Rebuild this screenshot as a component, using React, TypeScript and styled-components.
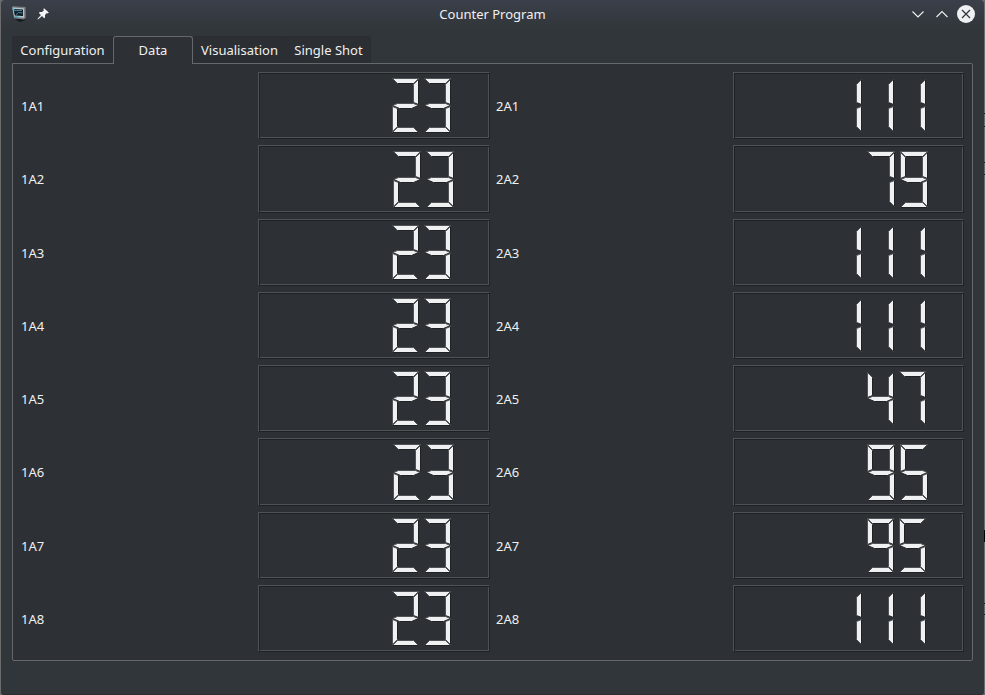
import React from "react";
import styled, { createGlobalStyle } from "styled-components";

const GlobalStyle = createGlobalStyle`
  html, body { margin: 0; padding: 0; background: #6c6c6c; overflow: hidden; }
  * { box-sizing: border-box; }
`;

const Desktop = styled.div`
  width: 985px;
  height: 695px;
  padding: 0 1px;
  background:
    linear-gradient(#141414, #141414) 984px 113px / 1px 1px no-repeat,
    linear-gradient(#141414, #141414) 984px 126px / 1px 1px no-repeat,
    linear-gradient(#141414, #141414) 984px 162px / 1px 1px no-repeat,
    linear-gradient(#141414, #141414) 984px 174px / 1px 1px no-repeat,
    linear-gradient(#000, #000) 984px 530px / 1px 12px no-repeat,
    linear-gradient(#141414, #141414) 984px 603px / 1px 1px no-repeat,
    linear-gradient(#141414, #141414) 984px 614px / 1px 1px no-repeat,
    #6c6c6c;
`;

const Window = styled.div`
  display: flex;
  flex-direction: column;
  height: 695px;
  border-radius: 4px 4px 3px 3px;
  border-bottom: 1px solid #2b2e33;
  background: linear-gradient(#3b3f4a 0, #31363a 29px, #31363a 100%);
  color: #eff0f1;
  font-family: "Noto Sans", sans-serif;
  font-size: 13px;
  line-height: 18px;
  overflow: hidden;
`;

const TitleBar = styled.header`
  display: grid;
  grid-template-columns: 60px 1fr 60px;
  align-items: center;
  height: 29px;
  padding: 0 9px 1px 9px;
`;

const TitleIcons = styled.div`
  display: flex;
  gap: 9px;
`;

const PinSlot = styled.div`
  padding-top: 3px;
`;

const Title = styled.div`
  text-align: center;
`;

const WindowButtons = styled.div`
  display: flex;
  justify-content: flex-end;
`;

const Icon = styled.svg`
  display: block;
  flex: none;
`;

const TabBar = styled.nav`
  display: flex;
  height: 28px;
  margin: 7px 0 -1px 11px;
  position: relative;
`;

const Tab = styled.div<{ $width: number; $active?: boolean; $last?: boolean }>`
  width: ${(p) => p.$width}px;
  height: ${(p) => (p.$active ? 28 : 27)}px;
  padding-top: ${(p) => (p.$active ? 4 : 5)}px;
  text-align: center;
  background: ${(p) => (p.$active ? "#2d3034" : "#2b2e32")};
  border: solid #66696c;
  border-width: ${(p) => (p.$active ? "1px 1px 0" : "0")};
  border-radius: ${(p) => (p.$active ? "3px 3px 0 0" : p.$last ? "0 3px 0 0" : "0")};
  box-shadow: ${(p) => (p.$active || p.$last ? "none" : "inset -1px 0 #292c30")};
`;

const Panel = styled.main`
  display: grid;
  grid-template-columns: 231px 232px 231px 231px;
  gap: 6px;
  grid-template-rows: 67px 68px 67px 67px 67px 68px 67px 67px;
  width: 961px;
  height: 598px;
  margin-left: 11px;
  padding: 8px;
  background: #2d3034;
  border: 1px solid #66696c;
  border-radius: 0 2px 2px 2px;
`;

const Label = styled.div`
  align-self: center;
`;

const LcdFrame = styled.div`
  border: 1px solid;
  border-color: #505356 #1f2225 #1f2225 #505356;
  box-shadow: inset 1px 1px #1f2225, inset -1px -1px #505356;
`;

const LcdSvg = styled.svg`
  display: block;
  margin: -1px;
`;

type Point = [number, number];
type Edge = { to: Point; dark: boolean };

// Segments: 0 top, 1 upper left, 2 upper right, 3 middle, 4 lower left, 5 lower right, 6 bottom
const SEGMENTS: Record<string, number[]> = {
  "1": [2, 5],
  "2": [0, 2, 3, 4, 6],
  "3": [0, 2, 3, 5, 6],
  "4": [1, 2, 3, 5],
  "5": [0, 1, 3, 5, 6],
  "7": [0, 2, 5],
  "9": [0, 1, 2, 3, 5, 6],
};

function segmentShape(no: number, len: number): { origin: Point; edges: Edge[] } {
  const w = Math.floor(len / 5);
  const h = Math.floor(w / 2);
  const L = (x: number, y: number): Edge => ({ to: [x, y], dark: false });
  const D = (x: number, y: number): Edge => ({ to: [x, y], dark: true });
  switch (no) {
    case 0:
      return { origin: [0, 0], edges: [L(len - 1, 0), L(len - w - 1, w), D(w, w), L(0, 0)] };
    case 1:
      return { origin: [0, 1], edges: [L(w, w), D(w, len - h - 2), D(0, len - 2), L(0, 0)] };
    case 2:
      return { origin: [len - 1, 1], edges: [D(0, len - 2), D(-w, len - h - 2), L(-w, w), L(0, 0)] };
    case 3:
      return {
        origin: [0, len],
        edges: [L(w, -h), L(len - w - 1, -h), L(len - 1, 0), D(len - w - 3, h + 1), D(w + 2, h + 1), D(0, 0)],
      };
    case 4:
      return { origin: [0, len + 1], edges: [L(w, h), D(w, len - w - 2), L(0, len - 2), L(0, 0)] };
    case 5:
      return { origin: [len - 1, len + 1], edges: [D(0, len - 2), L(-w, len - w - 2), L(-w, h), L(0, 0)] };
    default:
      return { origin: [0, len * 2], edges: [L(w, -w), L(len - w - 1, -w), L(len - 1, 0), D(0, 0)] };
  }
}

function Segment({ no, len, x, y }: { no: number; len: number; x: number; y: number }) {
  const { origin, edges } = segmentShape(no, len);
  const ox = x + origin[0] + 0.5;
  const oy = y + origin[1] + 0.5;
  const points = edges.map((e) => `${ox + e.to[0]},${oy + e.to[1]}`).join(" ");
  let from: Point = [0, 0];
  return (
    <g>
      <polygon points={points} fill="#eff0f1" />
      {edges.map((e, i) => {
        const [fx, fy] = from;
        from = e.to;
        return (
          <line
            key={i}
            x1={ox + fx}
            y1={oy + fy}
            x2={ox + e.to[0]}
            y2={oy + e.to[1]}
            stroke={e.dark ? "#1f2225" : "#505356"}
          />
        );
      })}
    </g>
  );
}

function Lcd({ value, width, height }: { value: string; width: number; height: number }) {
  const len = Math.floor((height * 5) / 12);
  const advance = Math.floor((len * 6) / 5);
  const left = Math.floor((width - 5 * advance + Math.floor(len / 5)) / 2);
  const top = Math.floor((height - len * 2) / 2);
  const chars = value.padStart(5).split("");
  return (
    <LcdFrame>
      <LcdSvg width={width} height={height}>
        {chars.map((c, i) =>
          (SEGMENTS[c] ?? []).map((no) => (
            <Segment key={`${i}-${no}`} no={no} len={len} x={left + i * advance} y={top} />
          ))
        )}
      </LcdSvg>
    </LcdFrame>
  );
}

const COUNTERS = [
  { first: "23", second: "111", height: 67 },
  { first: "23", second: "79", height: 68 },
  { first: "23", second: "111", height: 67 },
  { first: "23", second: "111", height: 67 },
  { first: "23", second: "47", height: 67 },
  { first: "23", second: "95", height: 68 },
  { first: "23", second: "95", height: 67 },
  { first: "23", second: "111", height: 67 },
];

function AppIcon() {
  return (
    <Icon width="18" height="18" viewBox="0 0 18 18">
      <path d="M5 14.5 12 13.5 16 15 10 17Z" fill="#15191c" />
      <path d="M2 1.8 3 1.2 15.6 2 15.8 12.6 14 14.6 4 13.2Z" fill="#777d80" />
      <path d="M2.4 2.6 14 3.2 14.2 12.8 4.2 11.8Z" fill="#b6c2c6" />
      <path d="M3.6 4 13 4.4 13 11 4.8 10.4Z" fill="#0c1d26" />
      <path d="M4.5 5.6 12 5.6M6 9.6 8.5 7.5 12.5 8" stroke="#4f8799" fill="none" />
      <path d="M4 3.4V6M4.5 11.4 8.5 11.9" stroke="#30bbdc" />
    </Icon>
  );
}

function PinIcon() {
  return (
    <Icon width="12" height="12" viewBox="0 0 12 12">
      <path
        d="M7 .2 11.8 4.6 10.8 5.5 9.8 5.1 8 7 8 9.4 7.1 10.2 5 8.1 1 11.6.4 11 3.9 7 1.9 5 2.7 4.1 5 4.1 7 2.3 6.3 1.2Z"
        fill="#f3f4f5"
      />
    </Icon>
  );
}

export default function App() {
  return (
    <>
      <GlobalStyle />
      <Desktop>
        <Window>
          <TitleBar>
            <TitleIcons>
              <AppIcon />
              <PinSlot>
                <PinIcon />
              </PinSlot>
            </TitleIcons>
            <Title>Counter Program</Title>
            <WindowButtons>
              <Icon width="66" height="20" viewBox="0 0 66 20">
                <g fill="none" stroke="#eff0f1" strokeWidth="1.1">
                  <path d="M3.5 7.5 9 13 14.5 7.5" />
                  <path d="M27.5 13 33 7.5 38.5 13" />
                </g>
                <circle cx="57" cy="10" r="9" fill="#eff0f1" />
                <path d="M53 6 61 14M61 6 53 14" stroke="#31363b" strokeWidth="1.2" />
              </Icon>
            </WindowButtons>
          </TitleBar>
          <TabBar>
            <Tab $width={101}>Configuration</Tab>
            <Tab $width={80} $active>Data</Tab>
            <Tab $width={93}>Visualisation</Tab>
            <Tab $width={85} $last>Single Shot</Tab>
          </TabBar>
          <Panel>
            {COUNTERS.map((row, i) => (
              <React.Fragment key={i}>
                <Label>1A{i + 1}</Label>
                <Lcd value={row.first} width={232} height={row.height} />
                <Label>2A{i + 1}</Label>
                <Lcd value={row.second} width={231} height={row.height} />
              </React.Fragment>
            ))}
          </Panel>
        </Window>
      </Desktop>
    </>
  );
}
